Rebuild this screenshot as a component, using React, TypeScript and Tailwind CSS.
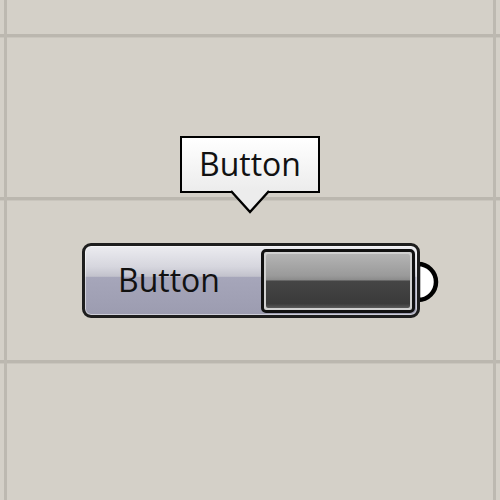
import React from 'react';

const font = { fontFamily: '"Open Sans", "Noto Sans", sans-serif' };

const HLine: React.FC<{ top: string }> = ({ top }) => (
  <div className={`absolute left-0 w-full ${top}`}>
    <div className="h-[3px] bg-[#bbb7af]" />
    <div className="h-px bg-[#c9c5bd]" />
  </div>
);

const Tooltip: React.FC = () => (
  <div className="relative w-[140px] h-[57px]">
    <div className="w-full h-full border-2 border-black bg-gradient-to-b from-white to-[#ececec] flex items-center justify-center">
      <span className="text-[32px] leading-none text-[#111] -mt-[2px]" style={font}>
        Button
      </span>
    </div>
    <svg
      className="absolute left-[50px] top-[54px]"
      width="40"
      height="26"
      viewBox="0 0 40 26"
    >
      <polygon points="1,0 20,22 39,0" fill="#ececec" />
      <polyline points="1,1 20,22 39,1" fill="none" stroke="black" strokeWidth="2.4" />
    </svg>
  </div>
);

const ButtonNode: React.FC = () => (
  <div className="relative flex items-center">
    <div className="relative z-10 w-[338px] h-[75px] rounded-[9px] border-[3px] border-[#1e1e1e] bg-[linear-gradient(to_bottom,#ececf0_0%,#d6d6de_30%,#c2c2cc_44%,#a6a6ba_45%,#9c9cb0_100%)] flex items-center justify-between pl-[33px] pr-[2px] shadow-[inset_0_0_0_1px_rgba(255,255,255,0.5)]">
      <span className="text-[32px] leading-none text-[#111] -mt-[2px]" style={font}>
        Button
      </span>
      <div className="w-[154px] h-[64px] rounded-[5px] border-[3px] border-[#111] bg-[#d0d0d0] p-[2px]">
        <div className="w-full h-full rounded-[2px] bg-[linear-gradient(to_bottom,#b4b4b4_0%,#9a9a9a_40%,#8c8c8c_48%,#454545_50%,#3a3a3a_92%,#5a5a5a_100%)]" />
      </div>
    </div>
    <svg className="absolute left-[332px] top-[18px]" width="26" height="42" viewBox="0 0 26 42">
      <path d="M4 3 A18 18 0 0 1 4 39 Z" fill="white" stroke="black" strokeWidth="4.5" />
    </svg>
  </div>
);

export default function App() {
  return (
    <div className="relative w-[500px] h-[500px] overflow-hidden bg-[#d4d0c8]">
      <HLine top="top-[34px]" />
      <HLine top="top-[197px]" />
      <HLine top="top-[360px]" />
      <div className="absolute top-0 left-[4px] h-full w-[3px] bg-[#bdb9b1]" />
      <div className="absolute top-0 left-[493px] h-full w-[3px] bg-[#bdb9b1]" />

      <div className="absolute left-[82px] top-[136px] flex flex-col">
        <div className="ml-[98px]">
          <Tooltip />
        </div>
        <div className="mt-[50px]">
          <ButtonNode />
        </div>
      </div>
    </div>
  );
}
